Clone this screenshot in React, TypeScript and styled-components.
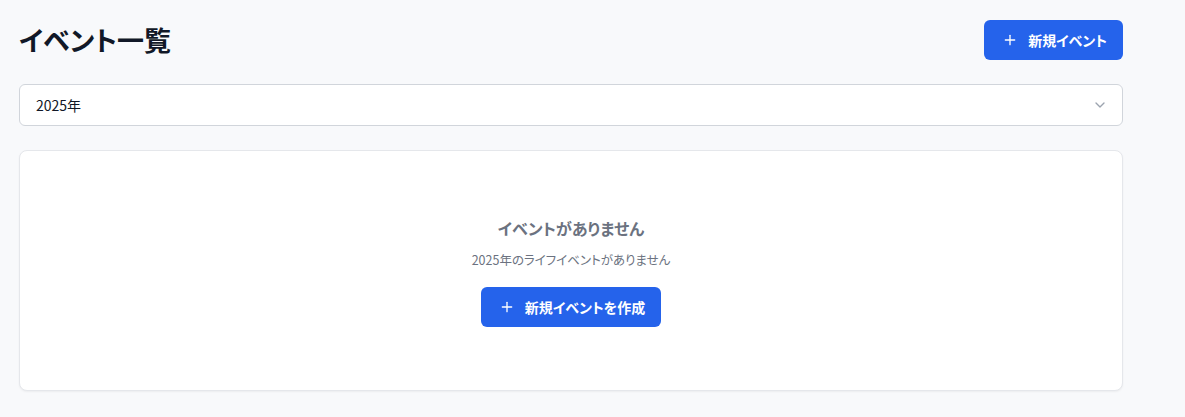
import { createGlobalStyle } from 'styled-components';
import styled from 'styled-components';
import { Plus, ChevronDown } from 'lucide-react';

const GlobalStyle = createGlobalStyle`
  html, body {
    margin: 0;
    padding: 0;
    background: #f8f9fb;
    font-family: "Noto Sans CJK JP", "Noto Sans", sans-serif;
    font-feature-settings: "palt";
    color: #111827;
  }
  * { box-sizing: border-box; }
`;

const Page = styled.div`
  width: 1143px;
  padding: 20px 20px 20px 19px;
`;

const Header = styled.div`
  display: flex;
  justify-content: space-between;
  align-items: center;
`;

const Title = styled.h1`
  margin: 0;
  font-size: 27px;
  font-weight: 700;
  line-height: 40px;
  color: #111827;
`;

const PrimaryButton = styled.button`
  display: inline-flex;
  align-items: center;
  gap: 10px;
  height: 40px;
  padding: 0 16px 0 18px;
  background: #2563eb;
  color: #fff;
  border: none;
  border-radius: 6px;
  font-family: inherit;
  font-feature-settings: "palt";
  font-size: 14px;
  font-weight: 700;
  cursor: pointer;
`;

const SelectBox = styled.div`
  margin-top: 24px;
  height: 42px;
  display: flex;
  align-items: center;
  justify-content: space-between;
  padding: 0 14px 0 16px;
  background: #fff;
  border: 1px solid #d1d5db;
  border-radius: 6px;
  font-size: 14px;
  color: #111827;
`;

const Card = styled.div`
  margin-top: 24px;
  background: #fff;
  border: 1px solid #e5e7eb;
  border-radius: 8px;
  box-shadow: 0 1px 2px rgba(0, 0, 0, 0.05);
  padding: 65px 24px 63px;
  display: flex;
  flex-direction: column;
  align-items: center;
`;

const EmptyTitle = styled.h3`
  margin: 0;
  font-size: 16px;
  line-height: 24px;
  font-weight: 700;
  color: #6b7280;
`;

const EmptyText = styled.p`
  margin: 10px 0 17px;
  font-size: 12.5px;
  line-height: 20px;
  color: #6b7280;
`;

export default function App() {
  return (
    <>
      <GlobalStyle />
      <Page>
        <Header>
          <Title>イベント一覧</Title>
          <PrimaryButton>
            <Plus size={16} strokeWidth={2} />
            新規イベント
          </PrimaryButton>
        </Header>

        <SelectBox>
          <span>2025年</span>
          <ChevronDown size={16} color="#9ca3af" />
        </SelectBox>

        <Card>
          <EmptyTitle>イベントがありません</EmptyTitle>
          <EmptyText>2025年のライフイベントがありません</EmptyText>
          <PrimaryButton>
            <Plus size={16} strokeWidth={2} />
            新規イベントを作成
          </PrimaryButton>
        </Card>
      </Page>
    </>
  );
}
